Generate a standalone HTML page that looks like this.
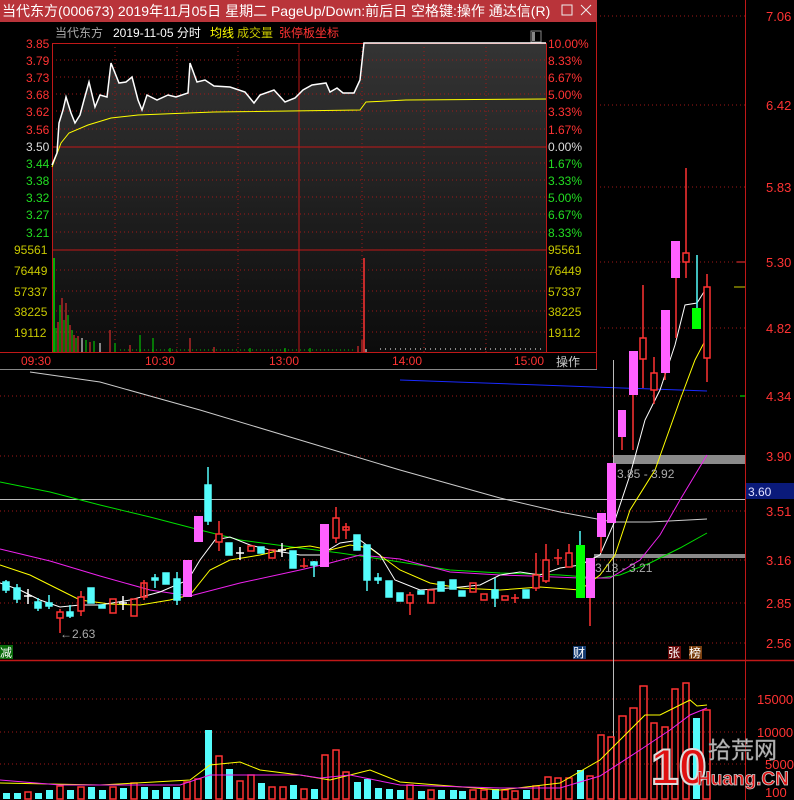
<!DOCTYPE html>
<html><head><meta charset="utf-8"><style>
html,body{margin:0;padding:0;background:#000;width:794px;height:800px;overflow:hidden}
svg{display:block;font-family:"Liberation Sans","Noto Sans CJK SC",sans-serif}
</style></head><body>
<svg width="794" height="800" viewBox="0 0 794 800" xmlns="http://www.w3.org/2000/svg">
<rect width="794" height="800" fill="#000"/>
<g stroke="#a01818" stroke-dasharray="1,3" stroke-width="1">
<line x1="0" y1="16" x2="745" y2="16"/><line x1="0" y1="105" x2="745" y2="105"/><line x1="0" y1="187" x2="745" y2="187"/><line x1="0" y1="262" x2="745" y2="262"/><line x1="0" y1="328" x2="745" y2="328"/><line x1="0" y1="396" x2="745" y2="396"/><line x1="0" y1="456" x2="745" y2="456"/><line x1="0" y1="511" x2="745" y2="511"/><line x1="0" y1="560" x2="745" y2="560"/><line x1="0" y1="603" x2="745" y2="603"/><line x1="0" y1="643" x2="745" y2="643"/>
<line x1="0" y1="699" x2="745" y2="699"/><line x1="0" y1="732" x2="745" y2="732"/><line x1="0" y1="764" x2="745" y2="764"/>
</g>
<line x1="745.5" y1="0" x2="745.5" y2="800" stroke="#c01818"/>
<line x1="0" y1="660.5" x2="794" y2="660.5" stroke="#c01818" stroke-width="1.5"/>
<g fill="#ff3333" font-size="13">
<text x="766" y="21">7.06</text><text x="766" y="110">6.42</text><text x="766" y="192">5.83</text><text x="766" y="267">5.30</text><text x="766" y="333">4.82</text><text x="766" y="401">4.34</text><text x="766" y="461">3.90</text><text x="766" y="516">3.51</text><text x="766" y="565">3.16</text><text x="766" y="608">2.85</text><text x="766" y="648">2.56</text>
<text x="757" y="704">15000</text><text x="757" y="737">10000</text><text x="765" y="769">5000</text><text x="765" y="797">100</text>
</g>
<line x1="737" y1="262" x2="745" y2="262" stroke="#ff3333"/><line x1="734" y1="287" x2="745" y2="287" stroke="#cccc00"/><line x1="740" y1="396" x2="745" y2="396" stroke="#00ff00"/>
<line x1="0" y1="499.5" x2="745" y2="499.5" stroke="#bbbbbb"/>
<rect x="746" y="483" width="48" height="16" fill="#0a1a7a"/><text x="748" y="496" fill="#e0e0ff" font-size="12">3.60</text>
<line x1="400" y1="380" x2="707" y2="391" stroke="#1a2aff"/>
<rect x="614" y="455" width="131" height="9" fill="#8a8a8a"/>
<rect x="594" y="554" width="151" height="4" fill="#8a8a8a"/>
<line x1="613.5" y1="360" x2="613.5" y2="800" stroke="#bbbbbb"/>
<g fill="none" stroke-width="1">
<polyline stroke="#cccccc" points="30,372 100,382 200,410 300,440 400,470 500,498 560,512 613,522 650,522 707,519"/>
<polyline stroke="#00e000" points="0,482 50,492 100,505 150,517 200,530 240,540 300,548 340,553 400,562 450,570 500,573 560,575 600,578 620,575 650,563 680,548 707,533"/>
<polyline stroke="#ee22ee" points="0,549 50,561 100,576 150,590 190,596 240,583 300,570 330,563 360,555 400,559 450,572 500,575 530,576 580,578 610,578 640,560 660,535 680,500 707,455"/>
<polyline stroke="#ffff00" points="0,565 30,575 60,590 80,600 110,604 140,605 170,600 190,595 210,570 230,560 260,555 290,548 310,546 330,550 350,545 370,548 400,570 430,583 460,588 500,590 540,587 580,590 600,575 615,555 630,510 655,470 680,400 695,360 707,337"/>
<polyline stroke="#ffffff" points="0,583 20,590 40,600 60,607 80,605 100,605 130,600 160,592 188,580 200,560 215,540 230,537 250,545 270,550 300,555 320,555 340,543 360,540 380,555 395,580 420,590 450,588 480,585 500,575 520,572 540,575 560,568 580,565 600,555 614,523 630,475 645,420 660,390 675,345 685,305 697,303 707,287"/>
</g>
<g stroke-width="1.5">
<g stroke="#54fcfc" fill="#54fcfc">
<line x1="6" y1="580" x2="6" y2="593"/><rect x="3" y="582" width="6" height="8"/>
<line x1="17" y1="584" x2="17" y2="603"/><rect x="14" y="588" width="6" height="11"/>
<line x1="38" y1="598" x2="38" y2="611"/><rect x="35" y="602" width="6" height="6"/>
<line x1="49" y1="595" x2="49" y2="609"/><rect x="46" y="603" width="6" height="3"/>
<line x1="70" y1="605" x2="70" y2="618"/><rect x="67" y="612" width="6" height="4"/>
<rect x="88" y="588" width="6" height="15"/>
<rect x="99" y="605" width="6" height="3"/>
<line x1="155" y1="574" x2="155" y2="588"/><rect x="152" y="578" width="6" height="2"/>
<rect x="163" y="573" width="6" height="11"/>
<line x1="177" y1="572" x2="177" y2="605"/><rect x="174" y="579" width="6" height="21"/>
<line x1="208" y1="467" x2="208" y2="525"/><rect x="205" y="485" width="6" height="36"/>
<rect x="226" y="543" width="6" height="12"/>
<rect x="258" y="547" width="6" height="6"/>
<rect x="290" y="551" width="6" height="17"/>
<line x1="314" y1="561" x2="314" y2="577"/><rect x="311" y="562" width="6" height="3"/>
<rect x="354" y="535" width="6" height="15"/>
<line x1="367" y1="545" x2="367" y2="591"/><rect x="364" y="545" width="6" height="35"/>
<line x1="378" y1="573" x2="378" y2="584"/><rect x="375" y="578" width="6" height="2"/>
<rect x="386" y="581" width="6" height="16"/>
<rect x="397" y="593" width="6" height="8"/>
<rect x="418" y="591" width="6" height="3"/>
<rect x="438" y="582" width="6" height="9"/>
<rect x="450" y="580" width="6" height="9"/>
<rect x="459" y="591" width="6" height="5"/>
<line x1="495" y1="578" x2="495" y2="607"/><rect x="492" y="590" width="6" height="8"/>
<rect x="523" y="590" width="6" height="8"/>
<line x1="697" y1="255" x2="697" y2="308"/>
</g>
<g stroke="#ffffff" stroke-width="1.5">
<line x1="28" y1="589" x2="28" y2="604"/><line x1="24" y1="596" x2="32" y2="596"/>
<line x1="123" y1="596" x2="123" y2="610"/><line x1="119" y1="603" x2="127" y2="603"/>
<line x1="240" y1="547" x2="240" y2="560"/><line x1="236" y1="553" x2="244" y2="553"/>
<line x1="282" y1="543" x2="282" y2="557"/><line x1="278" y1="550" x2="286" y2="550"/>
</g>
<g stroke="#ff3333" fill="none">
<line x1="60" y1="609" x2="60" y2="633"/><rect x="57" y="612" width="6" height="6" fill="#000"/>
<line x1="81" y1="591" x2="81" y2="616"/><rect x="78" y="597" width="6" height="14" fill="#000"/>
<rect x="110" y="599" width="6" height="14"/>
<rect x="131" y="599" width="6" height="17"/>
<line x1="144" y1="580" x2="144" y2="600"/><rect x="141" y="583" width="6" height="14"/>
<line x1="219" y1="521" x2="219" y2="551"/><rect x="216" y="534" width="6" height="8" fill="#000"/>
<rect x="248" y="546" width="6" height="5"/>
<rect x="269" y="550" width="6" height="8"/>
<line x1="304" y1="558" x2="304" y2="568"/><line x1="300" y1="566" x2="308" y2="566"/>
<line x1="336" y1="507" x2="336" y2="543"/><rect x="333" y="518" width="6" height="20" fill="#000"/>
<line x1="346" y1="523" x2="346" y2="539"/><rect x="343" y="527" width="6" height="3"/>
<line x1="410" y1="592" x2="410" y2="615"/><rect x="407" y="595" width="6" height="8" fill="#000"/>
<rect x="428" y="590" width="6" height="13"/>
<rect x="470" y="583" width="6" height="9"/>
<rect x="481" y="594" width="6" height="6"/>
<rect x="502" y="596" width="6" height="4"/>
<line x1="515" y1="594" x2="515" y2="603"/><line x1="511" y1="598" x2="519" y2="598"/>
<line x1="536" y1="553" x2="536" y2="591"/><rect x="533" y="575" width="6" height="13" fill="#000"/>
<line x1="546" y1="544" x2="546" y2="583"/><rect x="543" y="560" width="6" height="21" fill="#000"/>
<line x1="558" y1="549" x2="558" y2="565"/><line x1="554" y1="558" x2="562" y2="558"/>
<line x1="569" y1="544" x2="569" y2="567"/><rect x="566" y="553" width="6" height="14" fill="#000"/>
<line x1="590" y1="598" x2="590" y2="626"/>
<line x1="601" y1="537" x2="601" y2="553"/>
<line x1="622" y1="437" x2="622" y2="450"/>
<line x1="633" y1="395" x2="633" y2="450"/>
<line x1="643" y1="285" x2="643" y2="388"/><rect x="640" y="338" width="6" height="21" fill="#000"/>
<line x1="654" y1="357" x2="654" y2="404"/><rect x="651" y="373" width="6" height="17" fill="#000"/>
<line x1="665" y1="373" x2="665" y2="380"/>
<line x1="676" y1="278" x2="676" y2="338"/>
<line x1="686" y1="168" x2="686" y2="278"/><rect x="683" y="253" width="6" height="9" fill="#000"/>
<line x1="707" y1="274" x2="707" y2="382"/><rect x="704" y="287" width="6" height="71" fill="#000"/>
</g>
<g fill="#ff60ff" stroke="none">
<rect x="183" y="560" width="9" height="37"/>
<rect x="194" y="516" width="9" height="26"/>
<rect x="320" y="524" width="9" height="43"/>
<rect x="586" y="558" width="9" height="40"/>
<rect x="597" y="513" width="9" height="24"/>
<rect x="607" y="463" width="9" height="60"/>
<rect x="618" y="410" width="8" height="27"/>
<rect x="629" y="351" width="9" height="44"/>
<rect x="661" y="310" width="9" height="63"/>
<rect x="671" y="241" width="9" height="37"/>
</g>
<rect x="576" y="545" width="9" height="53" fill="#00ff00"/>
<line x1="580" y1="531" x2="580" y2="545" stroke="#54fcfc" stroke-width="1.5"/>
<rect x="692" y="308" width="9" height="21" fill="#00ff00"/>
</g>
<g fill="#aaaaaa" font-size="12">
<text x="60" y="638">←2.63</text><text x="595" y="572">3.13 - 3.21</text><text x="617" y="478">3.85 - 3.92</text>
</g>
<rect x="0" y="645" width="13" height="14" fill="#0a6a0a"/><text x="0" y="657" fill="#fff" font-size="12">减</text>
<rect x="573" y="646" width="13" height="13" fill="#143a70"/><text x="573" y="657" fill="#fff" font-size="12">财</text>
<rect x="668" y="646" width="13" height="13" fill="#6a0a0a"/><text x="668" y="657" fill="#fff" font-size="12">张</text>
<rect x="689" y="646" width="13" height="13" fill="#7a4010"/><text x="689" y="657" fill="#fff" font-size="12">榜</text>
<g stroke-width="1.5">
<g fill="#54fcfc">
<rect x="3" y="793" width="7" height="6"/><rect x="14" y="793" width="7" height="6"/><rect x="35" y="793" width="7" height="6"/><rect x="46" y="790" width="7" height="9"/><rect x="67" y="790" width="7" height="9"/><rect x="88" y="787" width="7" height="12"/><rect x="99" y="790" width="7" height="9"/><rect x="120" y="788" width="7" height="11"/><rect x="141" y="787" width="7" height="12"/><rect x="152" y="790" width="7" height="9"/><rect x="163" y="787" width="7" height="12"/><rect x="173" y="787" width="7" height="12"/>
<rect x="205" y="730" width="7" height="69"/><rect x="226" y="769" width="7" height="30"/><rect x="258" y="783" width="7" height="16"/><rect x="290" y="785" width="7" height="14"/><rect x="311" y="789" width="7" height="10"/><rect x="354" y="782" width="7" height="17"/><rect x="364" y="779" width="7" height="20"/><rect x="375" y="788" width="7" height="11"/><rect x="386" y="789" width="7" height="10"/><rect x="397" y="790" width="7" height="9"/><rect x="418" y="791" width="7" height="8"/><rect x="438" y="790" width="7" height="9"/><rect x="450" y="790" width="7" height="9"/><rect x="459" y="791" width="7" height="8"/><rect x="492" y="789" width="7" height="10"/><rect x="523" y="790" width="7" height="9"/><rect x="577" y="770" width="7" height="29"/><rect x="693" y="718" width="7" height="81"/>
</g>
<g fill="none" stroke="#ff3333">
<rect x="25" y="792" width="6" height="7"/><rect x="57" y="786" width="6" height="13"/><rect x="78" y="787" width="6" height="12"/><rect x="110" y="787" width="6" height="12"/><rect x="131" y="783" width="6" height="16"/><rect x="184" y="782" width="6" height="17"/><rect x="195" y="779" width="6" height="20"/><rect x="216" y="756" width="6" height="43"/><rect x="237" y="781" width="6" height="18"/><rect x="248" y="775" width="6" height="24"/><rect x="269" y="787" width="6" height="12"/><rect x="280" y="787" width="6" height="12"/><rect x="301" y="789" width="6" height="10"/><rect x="322" y="755" width="6" height="44"/><rect x="333" y="750" width="6" height="49"/><rect x="343" y="772" width="6" height="27"/><rect x="407" y="785" width="6" height="14"/><rect x="428" y="790" width="6" height="9"/><rect x="470" y="790" width="6" height="9"/><rect x="481" y="790" width="6" height="9"/><rect x="502" y="790" width="6" height="9"/><rect x="512" y="791" width="6" height="8"/><rect x="533" y="786" width="6" height="13"/><rect x="545" y="777" width="6" height="22"/><rect x="555" y="778" width="6" height="21"/><rect x="566" y="778" width="6" height="21"/><rect x="587" y="776" width="6" height="23"/><rect x="598" y="735" width="6" height="64"/><rect x="608" y="737" width="6" height="62"/><rect x="619" y="716" width="7" height="83"/><rect x="630" y="708" width="7" height="91"/><rect x="640" y="686" width="7" height="113"/><rect x="651" y="723" width="6" height="76"/><rect x="662" y="727" width="6" height="72"/><rect x="672" y="689" width="6" height="110"/><rect x="683" y="683" width="6" height="116"/><rect x="703" y="710" width="7" height="89"/>
</g>
</g>
<polyline fill="none" stroke="#ffff00" points="0,783 100,785 190,780 210,765 240,762 260,770 300,775 330,780 350,775 370,770 400,782 500,790 560,783 600,760 630,730 645,715 660,715 680,705 690,700 697,706 707,705"/>
<polyline fill="none" stroke="#ee22ee" points="0,780 60,785 180,785 210,775 300,775 320,778 350,775 400,785 500,788 560,788 600,776 640,750 670,730 690,715 707,708"/>
<text x="651" y="784" font-size="50" font-weight="bold" fill="#e01010" stroke="#dddddd" stroke-width="2" font-family="Liberation Sans,sans-serif">10</text>
<text x="708" y="758" font-size="23" fill="#bbbbbb" stroke="#888" stroke-width="0.5">拾荒网</text>
<text x="697" y="785" font-size="19" font-weight="bold" fill="#e01010" stroke="#cccccc" stroke-width="0.8">Huang.CN</text>

<rect x="0" y="0" width="597" height="370" fill="#000"/>
<rect x="0" y="0" width="597" height="22" fill="#b9343a"/>
<text x="2" y="16" fill="#fff" font-size="14">当代东方(000673) 2019年11月05日 星期二 PageUp/Down:前后日 空格键:操作 通达信(R)</text>
<rect x="562" y="5" width="10" height="10" fill="none" stroke="#eee"/>
<path d="M581 5 L591 15 M591 5 L581 15" stroke="#eee"/>
<text x="55" y="37" fill="#aaaaaa" font-size="12">当代东方</text>
<text x="113" y="37" fill="#ffffff" font-size="12">2019-11-05 分时</text>
<text x="210" y="37" fill="#ffff00" font-size="12">均线</text>
<text x="237" y="37" fill="#c8c800" font-size="12">成交量</text>
<text x="279" y="37" fill="#ff3333" font-size="12">张停板坐标</text>
<rect x="531" y="31" width="10" height="11" fill="none" stroke="#888"/><rect x="532" y="32" width="3" height="9" fill="#888"/>
<defs><linearGradient id="g" x1="0" y1="0" x2="0" y2="1"><stop offset="0" stop-color="#343434"/><stop offset="1" stop-color="#0c0c0c"/></linearGradient></defs>
<rect x="52" y="43" width="494" height="309" fill="url(#g)"/>
<polygon fill="#000" points="52,43 52,165 57,153 59,123 63,110 66,97 71,113 75,123 80,115 84,100 89,82 95,107 100,95 107,97 111,63 119,83 126,82 132,77 138,100 142,110 147,95 157,100 168,95 176,97 188,93 190,63 197,82 205,80 214,86 230,87 245,92 254,103 260,95 274,90 285,102 295,98 303,90 312,85 326,83 330,92 337,88 343,93 354,93 360,80 364,43"/>
<g stroke="#a01818" stroke-dasharray="1,3">
<line x1="52" y1="60" x2="546" y2="60"/><line x1="52" y1="77" x2="546" y2="77"/><line x1="52" y1="94" x2="546" y2="94"/><line x1="52" y1="111" x2="546" y2="111"/><line x1="52" y1="129" x2="546" y2="129"/><line x1="52" y1="163" x2="546" y2="163"/><line x1="52" y1="180" x2="546" y2="180"/><line x1="52" y1="197" x2="546" y2="197"/><line x1="52" y1="214" x2="546" y2="214"/><line x1="52" y1="232" x2="546" y2="232"/><line x1="52" y1="270" x2="546" y2="270"/><line x1="52" y1="291" x2="546" y2="291"/><line x1="52" y1="311" x2="546" y2="311"/><line x1="52" y1="332" x2="546" y2="332"/>
<line x1="115" y1="43" x2="115" y2="352"/><line x1="177" y1="43" x2="177" y2="352"/><line x1="238" y1="43" x2="238" y2="352"/><line x1="362" y1="43" x2="362" y2="352"/><line x1="424" y1="43" x2="424" y2="352"/><line x1="486" y1="43" x2="486" y2="352"/>
</g>
<g stroke="#c01818" fill="none">
<rect x="52.5" y="43.5" width="494" height="309"/>
<line x1="52" y1="147" x2="546" y2="147"/><line x1="52" y1="250" x2="546" y2="250"/><line x1="299" y1="43" x2="299" y2="352"/>
</g>
<line x1="0" y1="352.5" x2="597" y2="352.5" stroke="#c01818"/>
<line x1="596.5" y1="22" x2="596.5" y2="370" stroke="#c01818"/>
<line x1="0" y1="369.5" x2="597" y2="369.5" stroke="#888"/>
<g stroke-width="1">
<line x1="54" y1="258" x2="54" y2="352" stroke="#00e000" stroke-width="1.5"/>
<line x1="56" y1="328" x2="56" y2="352" stroke="#00e000"/><line x1="58" y1="322" x2="58" y2="352" stroke="#ff3333"/><line x1="60" y1="305" x2="60" y2="352" stroke="#00e000"/><line x1="62" y1="298" x2="62" y2="352" stroke="#ff3333"/><line x1="64" y1="320" x2="64" y2="352" stroke="#00e000"/><line x1="66" y1="303" x2="66" y2="352" stroke="#ff3333"/><line x1="68" y1="315" x2="68" y2="352" stroke="#00e000"/><line x1="70" y1="325" x2="70" y2="352" stroke="#ff3333"/><line x1="72" y1="330" x2="72" y2="352" stroke="#00e000"/><line x1="74" y1="335" x2="74" y2="352" stroke="#ff3333"/><line x1="76" y1="338" x2="76" y2="352" stroke="#00e000"/><line x1="78" y1="336" x2="78" y2="352" stroke="#ff3333"/><line x1="82" y1="338" x2="82" y2="352" stroke="#fff"/><line x1="86" y1="340" x2="86" y2="352" stroke="#00e000"/><line x1="90" y1="342" x2="90" y2="352" stroke="#ff3333"/><line x1="94" y1="341" x2="94" y2="352" stroke="#00e000"/><line x1="100" y1="343" x2="100" y2="352" stroke="#fff"/><line x1="110" y1="330" x2="110" y2="352" stroke="#ff3333"/><line x1="115" y1="343" x2="115" y2="352" stroke="#00e000"/><line x1="140" y1="335" x2="140" y2="352" stroke="#00e000"/><line x1="153" y1="338" x2="153" y2="352" stroke="#00e000"/><line x1="190" y1="338" x2="190" y2="352" stroke="#ff3333"/><line x1="130" y1="345" x2="130" y2="352" stroke="#ff3333"/><line x1="170" y1="348" x2="170" y2="352" stroke="#00e000"/><line x1="214" y1="347" x2="214" y2="352" stroke="#ff3333"/><line x1="250" y1="348" x2="250" y2="352" stroke="#00e000"/><line x1="285" y1="348" x2="285" y2="352" stroke="#00e000"/><line x1="310" y1="348" x2="310" y2="352" stroke="#00e000"/><line x1="358" y1="346" x2="358" y2="352" stroke="#ff3333"/><line x1="362" y1="340" x2="362" y2="352" stroke="#ff3333"/>
<line x1="364" y1="258" x2="364" y2="352" stroke="#ff3333" stroke-width="1.5"/>
<line x1="366" y1="349" x2="366" y2="352" stroke="#fff"/><line x1="380" y1="349" x2="545" y2="349" stroke="#fff" stroke-dasharray="1,4"/><line x1="120" y1="350" x2="355" y2="350" stroke="#00c000" stroke-dasharray="1,3"/>
</g>
<polyline fill="none" stroke="#ffff00" points="52,167 61,143 69,133 88,125 111,118 138,115 188,113 214,112 360,110 366,102 406,100 546,99"/>
<polyline fill="none" stroke="#ffffff" stroke-width="1.5" points="52,165 57,153 59,123 63,110 66,97 71,113 75,123 80,115 84,100 89,82 95,107 100,95 107,97 111,63 119,83 126,82 132,77 138,100 142,110 147,95 157,100 168,95 176,97 188,93 190,63 197,82 205,80 214,86 230,87 245,92 254,103 260,95 274,90 285,102 295,98 303,90 312,85 326,83 330,92 337,88 343,93 354,93 360,80 364,43 546,43"/>
<g font-size="12">
<g fill="#ff3333"><text x="26" y="48">3.85</text><text x="26" y="65">3.79</text><text x="26" y="82">3.73</text><text x="26" y="99">3.68</text><text x="26" y="116">3.62</text><text x="26" y="134">3.56</text>
<text x="548" y="48">10.00%</text><text x="548" y="65">8.33%</text><text x="548" y="82">6.67%</text><text x="548" y="99">5.00%</text><text x="548" y="116">3.33%</text><text x="548" y="134">1.67%</text></g>
<text x="26" y="151" fill="#ddd">3.50</text><text x="548" y="151" fill="#ddd">0.00%</text>
<g fill="#22dd22"><text x="26" y="168">3.44</text><text x="26" y="185">3.38</text><text x="26" y="202">3.32</text><text x="26" y="219">3.27</text><text x="26" y="237">3.21</text>
<text x="548" y="168">1.67%</text><text x="548" y="185">3.33%</text><text x="548" y="202">5.00%</text><text x="548" y="219">6.67%</text><text x="548" y="237">8.33%</text></g>
<g fill="#c8c800"><text x="14" y="254">95561</text><text x="14" y="275">76449</text><text x="14" y="296">57337</text><text x="14" y="316">38225</text><text x="14" y="337">19112</text>
<text x="548" y="254">95561</text><text x="548" y="275">76449</text><text x="548" y="296">57337</text><text x="548" y="316">38225</text><text x="548" y="337">19112</text></g>
<g fill="#ff3333"><text x="21" y="365">09:30</text><text x="145" y="365">10:30</text><text x="269" y="365">13:00</text><text x="392" y="365">14:00</text><text x="514" y="365">15:00</text></g>
<text x="556" y="366" fill="#ccc">操作</text>
</g>
</svg>
</body></html>
